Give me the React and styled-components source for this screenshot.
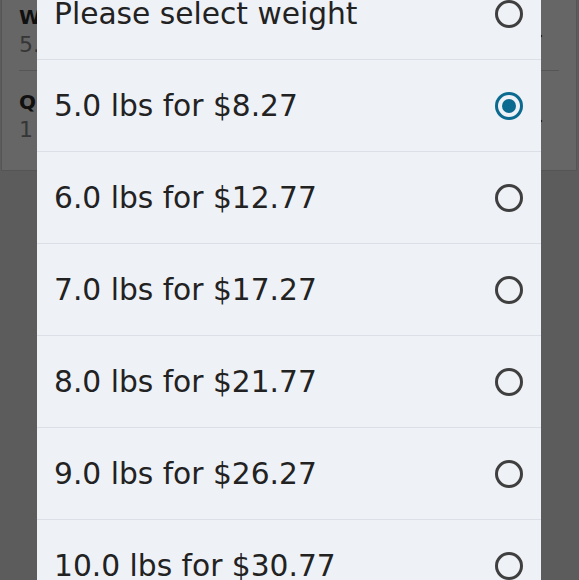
import React from "react";
import styled, { createGlobalStyle } from "styled-components";

const Global = createGlobalStyle`
  html, body { margin: 0; padding: 0; background: #e6e6e6; }
  body { font-family: "DejaVu Sans", "Liberation Sans", sans-serif; overflow: hidden; }
`;

const Page = styled.div`
  width: 579px;
  height: 580px;
  overflow: hidden;
`;

const Card = styled.div`
  margin: -15px 2px 0 1px;
  background: #ffffff;
  border: 1px solid #d4d4d4;
  padding-bottom: 15px;
`;

const FieldRow = styled.div`
  display: flex;
  align-items: center;
  margin: 0 17px;
  padding: 18px 0 10px;
  border-bottom: ${(p) => (p.$last ? "none" : "1px solid #d8d8d8")};
`;

const FieldText = styled.div`
  flex: 1;
  display: flex;
  flex-direction: column;
`;

const FieldLabel = styled.div`
  font-family: "DejaVu Sans", sans-serif;
  font-weight: 700;
  font-size: 20px;
  line-height: 26px;
  color: #2a2a2a;
`;

const FieldValue = styled.div`
  font-family: "DejaVu Sans", sans-serif;
  font-size: 22px;
  line-height: 30px;
  color: #888;
`;

const Chevron = styled.svg`
  width: 10px;
  height: 16px;
  margin: 8px 16px 0 0;
  color: #333;
`;

const Overlay = styled.div`
  position: fixed;
  inset: 0;
  background: rgba(0, 0, 0, 0.6);
`;

const Sheet = styled.div`
  position: fixed;
  top: -32px;
  left: 37px;
  width: 504px;
  background: #eef1f6;
`;

const Option = styled.div`
  display: flex;
  align-items: center;
  justify-content: space-between;
  height: 91px;
  padding: 0 18px 0 17px;
  border-bottom: 1px solid #dcdfe5;
`;

const OptionText = styled.span`
  font-family: "DejaVu Sans", sans-serif;
  font-size: 29.7px;
  color: #222;
  white-space: nowrap;
`;

const Radio = styled.span`
  box-sizing: border-box;
  width: 28px;
  height: 28px;
  border-radius: 50%;
  border: 3px solid ${(p) => (p.$checked ? "#0b6a8f" : "#3f3f3f")};
  display: flex;
  align-items: center;
  justify-content: center;
  &::after {
    content: "";
    display: ${(p) => (p.$checked ? "block" : "none")};
    width: 14px;
    height: 14px;
    border-radius: 50%;
    background: #0b6a8f;
  }
`;

const fields = [
  { label: "Weight", value: "5.0 lbs" },
  { label: "Quantity", value: "1" },
];

const options = [
  "Please select weight",
  "5.0 lbs for $8.27",
  "6.0 lbs for $12.77",
  "7.0 lbs for $17.27",
  "8.0 lbs for $21.77",
  "9.0 lbs for $26.27",
  "10.0 lbs for $30.77",
];

export default function App() {
  return (
    <Page>
      <Global />
      <Card>
        {fields.map((f, i) => (
          <FieldRow key={f.label} $last={i === fields.length - 1}>
            <FieldText>
              <FieldLabel>{f.label}</FieldLabel>
              <FieldValue>{f.value}</FieldValue>
            </FieldText>
            <Chevron viewBox="0 0 10 16">
              <path d="M2 2l6 6-6 6" fill="none" stroke="currentColor" strokeWidth="2" />
            </Chevron>
          </FieldRow>
        ))}
      </Card>
      <Overlay />
      <Sheet>
        {options.map((o, i) => (
          <Option key={o}>
            <OptionText>{o}</OptionText>
            <Radio $checked={i === 1} />
          </Option>
        ))}
      </Sheet>
    </Page>
  );
}
